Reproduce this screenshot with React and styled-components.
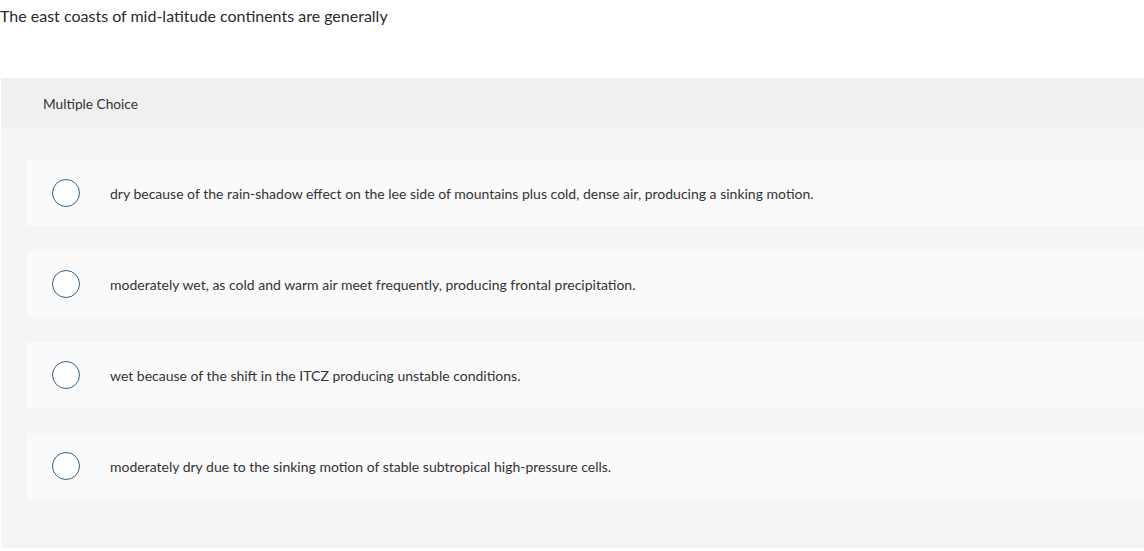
import React from 'react';
import styled, { createGlobalStyle } from 'styled-components';

const GlobalStyle = createGlobalStyle`
  html, body {
    margin: 0;
    padding: 0;
    background: #ffffff;
  }
  body {
    font-family: Lato, "Open Sans", sans-serif;
    color: #333333;
  }
`;

const Page = styled.div`
  width: 1144px;
  height: 551px;
  overflow: hidden;
`;

const Prompt = styled.p`
  margin: 0;
  padding: 7px 0 0 0;
  font-size: 16px;
  line-height: 18px;
  color: #2b2b2b;
`;

const Panel = styled.section`
  margin: 53px 0 0 1px;
  background: #f5f5f5;
  height: 470px;
`;

const PanelHeader = styled.header`
  height: 50px;
  display: flex;
  align-items: center;
  padding-left: 42px;
  background: #f0f0f0;
  font-size: 13.7px;
  color: #333333;
`;

const Choices = styled.ul`
  list-style: none;
  margin: 0;
  padding: 32px 0 0 26px;
  display: flex;
  flex-direction: column;
  gap: 25px;
`;

const Choice = styled.li`
  height: 66px;
  display: flex;
  align-items: center;
  background: #fafafa;
  padding-left: 25px;
  font-size: 14px;
  color: #333333;
  cursor: pointer;
`;

const Radio = styled.span`
  box-sizing: border-box;
  width: 28px;
  height: 28px;
  flex: none;
  border-radius: 50%;
  border: 1.75px solid #2f5f8f;
  background: #ffffff;
  margin-right: 30px;
`;

const choices = [
  'dry because of the rain-shadow effect on the lee side of mountains plus cold, dense air, producing a sinking motion.',
  'moderately wet, as cold and warm air meet frequently, producing frontal precipitation.',
  'wet because of the shift in the ITCZ producing unstable conditions.',
  'moderately dry due to the sinking motion of stable subtropical high-pressure cells.'
];

const App = () => (
  <Page>
    <GlobalStyle />
    <Prompt>The east coasts of mid-latitude continents are generally</Prompt>
    <Panel>
      <PanelHeader>Multiple Choice</PanelHeader>
      <Choices>
        {choices.map((text) => (
          <Choice key={text}>
            <Radio />
            {text}
          </Choice>
        ))}
      </Choices>
    </Panel>
  </Page>
);

export default App;
